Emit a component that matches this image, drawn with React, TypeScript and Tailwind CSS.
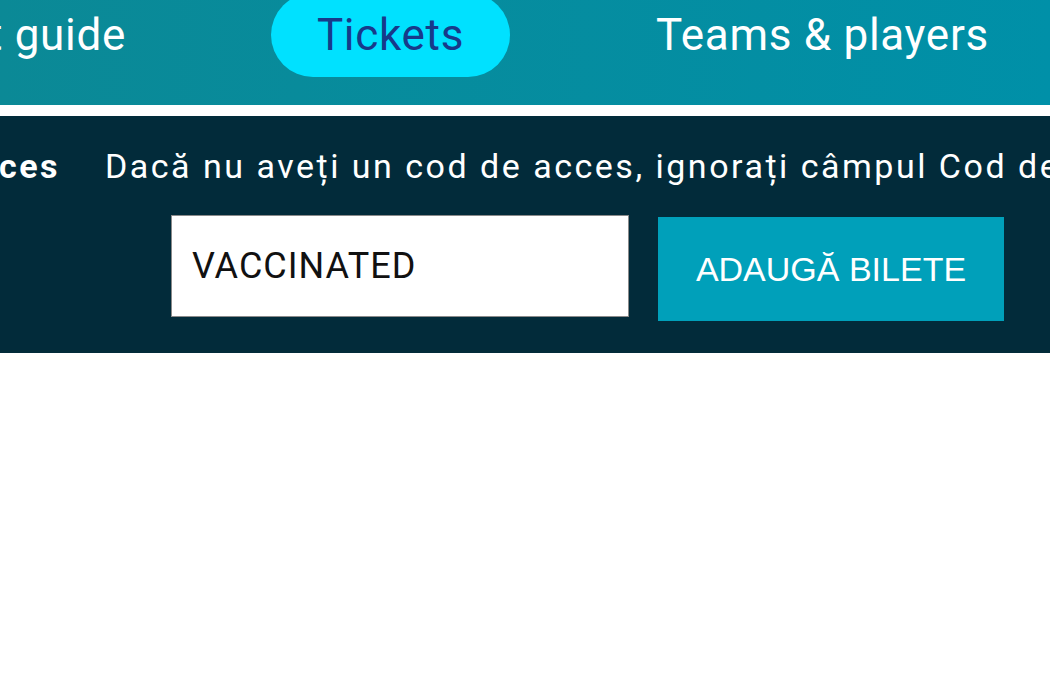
import React from 'react';

const App: React.FC = () => {
  return (
    <div className="w-[1050px] h-[700px] overflow-hidden bg-white font-['Roboto',sans-serif]">
      {/* top nav */}
      <div className="h-[105px] overflow-hidden bg-gradient-to-r from-[#0b8996] to-[#0090a8]">
        <div className="flex items-center h-[84px] -mt-[7px] text-[44px] tracking-[0.7px] text-white whitespace-nowrap">
          <div className="w-[126px] flex justify-end shrink-0">
            <span>Event guide</span>
          </div>
          <div className="ml-[145px] h-[84px] w-[239px] shrink-0 rounded-full bg-[#00e1ff] flex items-center justify-center text-[#173a8a]">
            Tickets
          </div>
          <div className="ml-[146px]">Teams &amp; players</div>
        </div>
      </div>
      <div className="h-[11px] bg-white" />

      {/* access code band */}
      <div className="h-[237px] bg-[#022b3a] overflow-hidden">
        <div className="flex items-center pt-[33px] text-[34px] tracking-[2.5px] text-white whitespace-nowrap leading-none">
          <div className="w-[60px] flex justify-end shrink-0">
            <span className="font-bold">Cod de acces</span>
          </div>
          <span className="ml-[45px]">Dacă nu aveți un cod de acces, ignorați câmpul Cod de acces</span>
        </div>
        <div className="flex items-start pl-[171px] mt-[32px]">
          <input
            readOnly
            value="VACCINATED"
            className="w-[458px] h-[102px] bg-white border border-[#8a8a8a] px-[20px] text-[36px] tracking-[1px] text-[#111] font-['Roboto',sans-serif] outline-none"
          />
          <button className="ml-[29px] mt-[2px] w-[346px] h-[104px] bg-[#00a0ba] text-white text-[34px] font-['Liberation_Sans',Arial,sans-serif]">
            ADAUGĂ BILETE
          </button>
        </div>
      </div>
    </div>
  );
};

export default App;
